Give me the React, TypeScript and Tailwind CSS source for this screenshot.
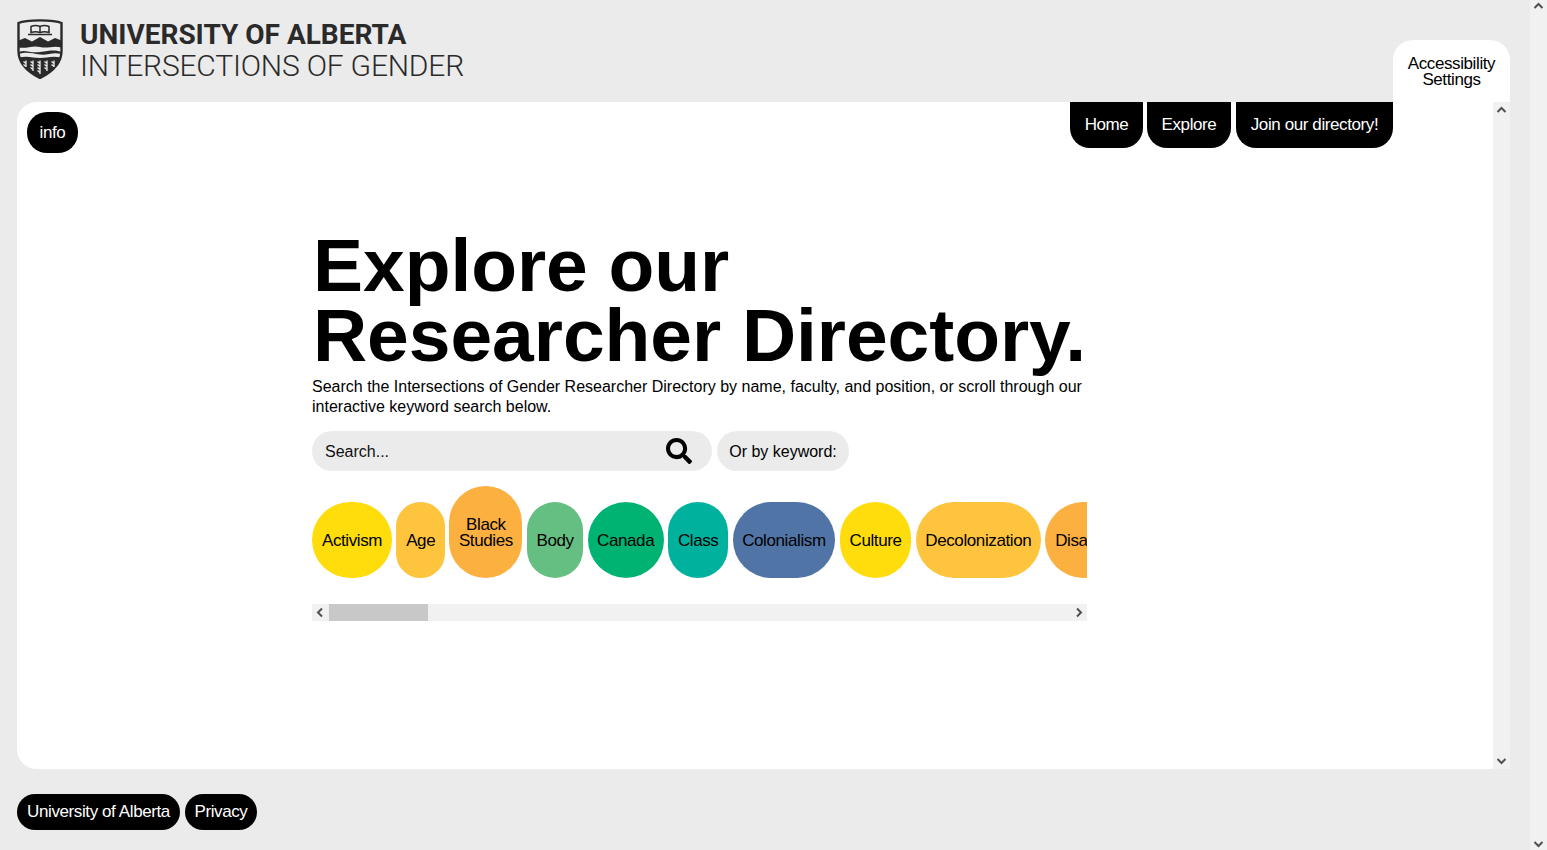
import React from "react";
import { FaSearch } from "react-icons/fa";

type Dir = "up" | "down" | "left" | "right";
const paths: Record<Dir, string> = {
  up: "M1.5 7 L5.5 3 L9.5 7",
  down: "M1.5 4 L5.5 8 L9.5 4",
  left: "M7 1.5 L3 5.5 L7 9.5",
  right: "M4 1.5 L8 5.5 L4 9.5",
};
function Chevron({ dir }: { dir: Dir }) {
  return (
    <svg width="11" height="11" viewBox="0 0 11 11" fill="none">
      <path d={paths[dir]} stroke="#505050" strokeWidth="2" />
    </svg>
  );
}

function Shield() {
  return (
    <svg width="46" height="60" viewBox="0 0 46 60" className="shrink-0">
      <path d="M1.5 4 C9 0.5 37 0.5 44.5 4 L44.5 32 C44.5 46 33 54 23 59 C13 54 1.5 46 1.5 32 Z" fill="#ebebeb" stroke="#2a2a2a" strokeWidth="2.4" />
      <path d="M14 7.5 C17 6.2 20 6.2 23 7.5 C26 6.2 29 6.2 32 7.5 V13.5 C29 12.5 26 12.5 23 13.5 C20 12.5 17 12.5 14 13.5 Z" fill="none" stroke="#2a2a2a" strokeWidth="1.5" />
      <path d="M23 7.5 V13.5 M11 15.5 H35" stroke="#2a2a2a" strokeWidth="1.5" fill="none" />
      <path d="M1.5 21.5 L8 19 L15 22.5 L23 18 L31 22.5 L38 19 L44.5 21.5 L44.5 28.5 C36 26 31 30 23 28 C15 26 10 30 1.5 28.5 Z" fill="#2a2a2a" />
      <path d="M2 33 C8 30 13 34.5 23 33 C33 31.5 38 30.5 44 33 L44 35 C36 32.5 31 36.5 23 35.5 C15 34.5 9 32.5 2 35 Z" fill="#2a2a2a" />
      <path d="M2 38.5 C11 36.5 16 39 23 39 C30 39 35 36.5 44 38.5 C42 48 32 54 23 59 C14 54 4 48 2 38.5 Z" fill="#2a2a2a" />
      <g stroke="#ebebeb" strokeWidth="1.3" fill="none">
        <path d="M9 41.5 V48 M6.5 42.5 L9 44.5 M6.5 45.5 L9 47.5" />
        <path d="M16 41.5 V52 M13.5 42.5 L16 44.5 M13.5 45.5 L16 47.5 M13.5 48.5 L16 50.5" />
        <path d="M23 41.5 V55 M20.5 42.5 L23 44.5 M20.5 45.5 L23 47.5 M20.5 48.5 L23 50.5 M20.5 51.5 L23 53.5" />
        <path d="M30 41.5 V52 M27.5 42.5 L30 44.5 M27.5 45.5 L30 47.5 M27.5 48.5 L30 50.5" />
        <path d="M37 41.5 V48 M34.5 42.5 L37 44.5 M34.5 45.5 L37 47.5" />
      </g>
    </svg>
  );
}

const keywords: { label: React.ReactNode; bg: string; w: string }[] = [
  { label: "Activism", bg: "bg-[#ffdc0b]", w: "w-[80px]" },
  { label: "Age", bg: "bg-[#ffc43d]", w: "w-[48.6px]" },
  { label: <>Black<br />Studies</>, bg: "bg-[#fcb040]", w: "w-[73px]" },
  { label: "Body", bg: "bg-[#66bf82]", w: "w-[56.5px]" },
  { label: "Canada", bg: "bg-[#00b373]", w: "w-[76px]" },
  { label: "Class", bg: "bg-[#00b29d]", w: "w-[60.2px]" },
  { label: "Colonialism", bg: "bg-[#5074a5]", w: "w-[102.6px]" },
  { label: "Culture", bg: "bg-[#ffdc0b]", w: "w-[71.8px]" },
  { label: "Decolonization", bg: "bg-[#ffc43d]", w: "w-[125px]" },
  { label: "Disability", bg: "bg-[#fcb040]", w: "w-[84px]" },
  { label: "Education", bg: "bg-[#66bf82]", w: "w-[92px]" },
];

export default function App() {
  return (
    <div className="flex h-[850px] w-full overflow-hidden bg-[#ebebeb] font-['Liberation_Sans',Arial,sans-serif] text-[16px] leading-[20px] text-black">
      <div className="flex w-[1530px] flex-col">
        <header className="flex h-[102px] items-start justify-between pl-[17px] pr-[20px]">
          <div className="flex items-start gap-[17px] pt-[19px] text-[#2a2a2a]">
            <Shield />
            <div className="font-['Roboto',sans-serif] uppercase whitespace-nowrap">
              <div className="h-[31px] text-[28px] font-bold leading-[31px]">University of Alberta</div>
              <div className="h-[31px] text-[30px] font-light leading-[31px] tracking-[-0.2px]">Intersections of Gender</div>
            </div>
          </div>
          <div className="mt-[40px] flex h-[62px] w-[117px] justify-center rounded-t-[20px] bg-white pt-[16px] text-center text-[17px] leading-[16px] tracking-[-0.4px]">
            <span>Accessibility<br />Settings</span>
          </div>
        </header>

        <main className="mr-[20px] ml-[17px] flex h-[667px] rounded-l-[20px] bg-white">
          <div className="flex min-w-0 flex-1 flex-col">
            <div className="flex items-start justify-between pr-[100px] pl-[10px]">
              <button className="mt-[10px] flex h-[41px] w-[51px] items-center justify-center rounded-[20px] bg-black text-[17px] tracking-[-0.4px] text-white">info</button>
              <nav className="flex text-[17px] tracking-[-0.4px] text-white">
                <a className="flex h-[46px] w-[73px] items-center justify-center rounded-b-[20px] bg-black">Home</a>
                <a className="ml-[4px] flex h-[46px] w-[84px] items-center justify-center rounded-b-[20px] bg-black">Explore</a>
                <a className="ml-[5px] flex h-[46px] w-[157px] items-center justify-center rounded-b-[20px] bg-black">Join our directory!</a>
              </nav>
            </div>

            <section className="mt-[77px] ml-[295px] w-[775px]">
              <h1 className="pl-[1px] text-[75px] leading-[70px] font-bold tracking-[-0.05px] whitespace-nowrap">Explore our<br />Researcher Directory.</h1>
              <p className="mt-[7px] w-[775px] text-[16px] leading-[20px]">
                Search the Intersections of Gender Researcher Directory by name, faculty, and position, or scroll through our interactive keyword search below.
              </p>
              <div className="mt-[14px] flex gap-[5px]">
                <div className="flex h-[40px] w-[400px] items-center justify-between rounded-[20px] bg-[#ebebeb] pr-[20px] pl-[13px] text-[#111]">
                  <span className="pt-[1px]">Search...</span>
                  <FaSearch size={26} color="#000" />
                </div>
                <div className="flex h-[40px] w-[132px] items-center justify-center rounded-[20px] bg-[#ebebeb] pt-[1px] text-[16px]">Or by keyword:</div>
              </div>
              <div className="mt-[15px] flex h-[92px] items-end gap-[4.4px] overflow-hidden">
                {keywords.map((k, i) => (
                  <div
                    key={i}
                    className={`flex shrink-0 items-center justify-center rounded-[38px] pt-[2px] text-center text-[17px] leading-[16px] tracking-[-0.4px] ${k.bg} ${k.w} ${i === 2 ? "h-[92px]" : "h-[76px]"}`}
                  >
                    <span>{k.label}</span>
                  </div>
                ))}
              </div>
              <div className="mt-[26px] flex h-[17px] items-center bg-[#f1f1f1]">
                <div className="flex h-[17px] w-[17px] items-center justify-center"><Chevron dir="left" /></div>
                <div className="h-[17px] w-[99px] bg-[#c8c8c8]" />
                <div className="flex-1" />
                <div className="flex h-[17px] w-[17px] items-center justify-center"><Chevron dir="right" /></div>
              </div>
            </section>
          </div>
          <div className="flex w-[17px] flex-col items-center justify-between bg-[#f1f1f1] py-[3px]">
            <Chevron dir="up" />
            <Chevron dir="down" />
          </div>
        </main>

        <footer className="flex gap-[5px] pt-[25px] pl-[17px] text-[17px] tracking-[-0.4px] text-white">
          <a className="flex h-[36px] w-[163px] items-center justify-center rounded-[18px] bg-black">University of Alberta</a>
          <a className="flex h-[36px] w-[72px] items-center justify-center rounded-[18px] bg-black">Privacy</a>
        </footer>
      </div>
      <div className="flex w-[17px] flex-col items-center justify-between bg-[#f1f1f1] py-[1px]">
        <Chevron dir="up" />
        <Chevron dir="down" />
      </div>
    </div>
  );
}
